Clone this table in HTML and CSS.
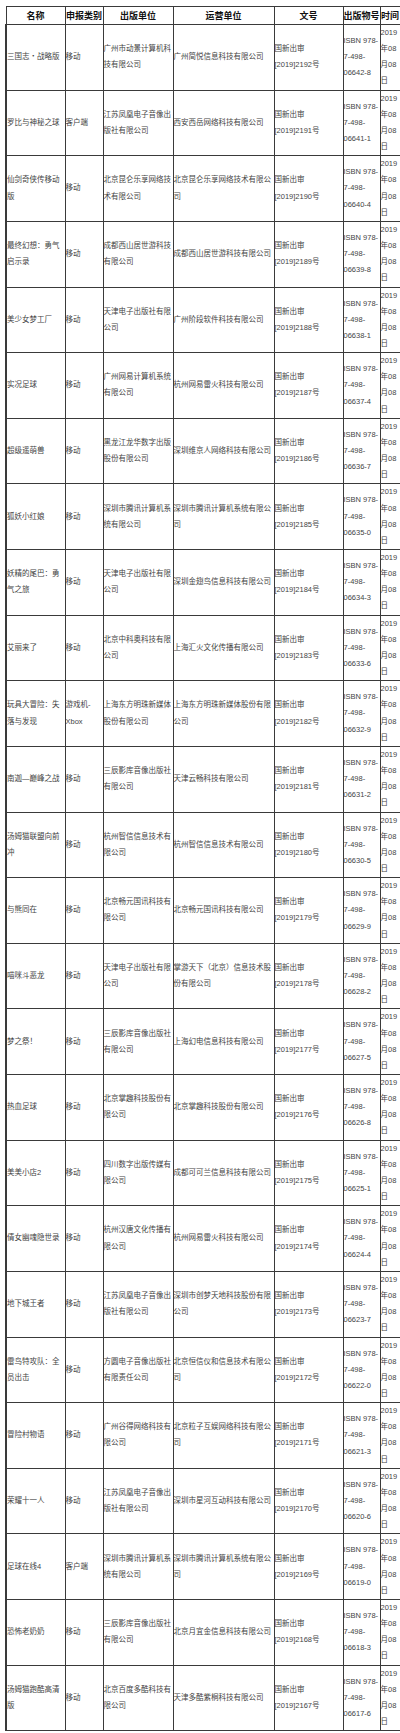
FILE: index.html
```html
<!DOCTYPE html>
<html lang="zh-CN">
<head>
<meta charset="utf-8">
<title>版号列表</title>
<link rel="stylesheet" href="styles.css">
</head>
<body>
<table class="list">
  <colgroup>
    <col class="c-name"><col class="c-type"><col class="c-pub"><col class="c-op"><col class="c-no"><col class="c-isbn"><col class="c-date">
  </colgroup>
  <thead>
    <tr><th>名称</th><th>申报类别</th><th>出版单位</th><th>运营单位</th><th>文号</th><th>出版物号</th><th>时间</th></tr>
  </thead>
  <tbody>
    <tr><td>三国志・战略版</td><td>移动</td><td>广州市动景计算机科技有限公司</td><td>广州简悦信息科技有限公司</td><td>国新出审<span class="num">[2019]2192号</span></td><td>ISBN 978-7-498-06642-8</td><td>2019年08月08日</td></tr>
    <tr><td>罗比与神秘之球</td><td>客户端</td><td>江苏凤凰电子音像出版社有限公司</td><td>西安西岳网络科技有限公司</td><td>国新出审<span class="num">[2019]2191号</span></td><td>ISBN 978-7-498-06641-1</td><td>2019年08月08日</td></tr>
    <tr><td>仙剑奇侠传移动版</td><td>移动</td><td>北京昆仑乐享网络技术有限公司</td><td>北京昆仑乐享网络技术有限公司</td><td>国新出审<span class="num">[2019]2190号</span></td><td>ISBN 978-7-498-06640-4</td><td>2019年08月08日</td></tr>
    <tr><td>最终幻想：勇气启示录</td><td>移动</td><td>成都西山居世游科技有限公司</td><td>成都西山居世游科技有限公司</td><td>国新出审<span class="num">[2019]2189号</span></td><td>ISBN 978-7-498-06639-8</td><td>2019年08月08日</td></tr>
    <tr><td>美少女梦工厂</td><td>移动</td><td>天津电子出版社有限公司</td><td>广州阶段软件科技有限公司</td><td>国新出审<span class="num">[2019]2188号</span></td><td>ISBN 978-7-498-06638-1</td><td>2019年08月08日</td></tr>
    <tr><td>实况足球</td><td>移动</td><td>广州网易计算机系统有限公司</td><td>杭州网易雷火科技有限公司</td><td>国新出审<span class="num">[2019]2187号</span></td><td>ISBN 978-7-498-06637-4</td><td>2019年08月08日</td></tr>
    <tr><td>超级遥萌兽</td><td>移动</td><td>黑龙江龙华数字出版股份有限公司</td><td>深圳维京人网络科技有限公司</td><td>国新出审<span class="num">[2019]2186号</span></td><td>ISBN 978-7-498-06636-7</td><td>2019年08月08日</td></tr>
    <tr><td>狐妖小红娘</td><td>移动</td><td>深圳市腾讯计算机系统有限公司</td><td>深圳市腾讯计算机系统有限公司</td><td>国新出审<span class="num">[2019]2185号</span></td><td>ISBN 978-7-498-06635-0</td><td>2019年08月08日</td></tr>
    <tr><td>妖精的尾巴：勇气之旅</td><td>移动</td><td>天津电子出版社有限公司</td><td>深圳金翅鸟信息科技有限公司</td><td>国新出审<span class="num">[2019]2184号</span></td><td>ISBN 978-7-498-06634-3</td><td>2019年08月08日</td></tr>
    <tr><td>艾丽来了</td><td>移动</td><td>北京中科奥科技有限公司</td><td>上海汇火文化传播有限公司</td><td>国新出审<span class="num">[2019]2183号</span></td><td>ISBN 978-7-498-06633-6</td><td>2019年08月08日</td></tr>
    <tr><td>玩具大冒险：失落与发现</td><td>游戏机-Xbox</td><td>上海东方明珠新媒体股份有限公司</td><td>上海东方明珠新媒体股份有限公司</td><td>国新出审<span class="num">[2019]2182号</span></td><td>ISBN 978-7-498-06632-9</td><td>2019年08月08日</td></tr>
    <tr><td>南迦—巅峰之战</td><td>移动</td><td>三辰影库音像出版社有限公司</td><td>天津云畅科技有限公司</td><td>国新出审<span class="num">[2019]2181号</span></td><td>ISBN 978-7-498-06631-2</td><td>2019年08月08日</td></tr>
    <tr><td>汤姆猫联盟向前冲</td><td>移动</td><td>杭州智信信息技术有限公司</td><td>杭州智信信息技术有限公司</td><td>国新出审<span class="num">[2019]2180号</span></td><td>ISBN 978-7-498-06630-5</td><td>2019年08月08日</td></tr>
    <tr><td>与熊同在</td><td>移动</td><td>北京畅元国讯科技有限公司</td><td>北京畅元国讯科技有限公司</td><td>国新出审<span class="num">[2019]2179号</span></td><td>ISBN 978-7-498-06629-9</td><td>2019年08月08日</td></tr>
    <tr><td>喵咪斗恶龙</td><td>移动</td><td>天津电子出版社有限公司</td><td>掌游天下（北京）信息技术股份有限公司</td><td>国新出审<span class="num">[2019]2178号</span></td><td>ISBN 978-7-498-06628-2</td><td>2019年08月08日</td></tr>
    <tr><td>梦之祭！</td><td>移动</td><td>三辰影库音像出版社有限公司</td><td>上海幻电信息科技有限公司</td><td>国新出审<span class="num">[2019]2177号</span></td><td>ISBN 978-7-498-06627-5</td><td>2019年08月08日</td></tr>
    <tr><td>热血足球</td><td>移动</td><td>北京掌趣科技股份有限公司</td><td>北京掌趣科技股份有限公司</td><td>国新出审<span class="num">[2019]2176号</span></td><td>ISBN 978-7-498-06626-8</td><td>2019年08月08日</td></tr>
    <tr><td>美美小店2</td><td>移动</td><td>四川数字出版传媒有限公司</td><td>成都可可兰信息科技有限公司</td><td>国新出审<span class="num">[2019]2175号</span></td><td>ISBN 978-7-498-06625-1</td><td>2019年08月08日</td></tr>
    <tr><td>倩女幽魂隐世录</td><td>移动</td><td>杭州汉唐文化传播有限公司</td><td>杭州网易雷火科技有限公司</td><td>国新出审<span class="num">[2019]2174号</span></td><td>ISBN 978-7-498-06624-4</td><td>2019年08月08日</td></tr>
    <tr><td>地下城王者</td><td>移动</td><td>江苏凤凰电子音像出版社有限公司</td><td>深圳市创梦天地科技股份有限公司</td><td>国新出审<span class="num">[2019]2173号</span></td><td>ISBN 978-7-498-06623-7</td><td>2019年08月08日</td></tr>
    <tr><td>雷鸟特攻队：全员出击</td><td>移动</td><td>方圆电子音像出版社有限责任公司</td><td>北京恒信仪和信息技术有限公司</td><td>国新出审<span class="num">[2019]2172号</span></td><td>ISBN 978-7-498-06622-0</td><td>2019年08月08日</td></tr>
    <tr><td>冒险村物语</td><td>移动</td><td>广州谷得网络科技有限公司</td><td>北京粒子互娱网络科技有限公司</td><td>国新出审<span class="num">[2019]2171号</span></td><td>ISBN 978-7-498-06621-3</td><td>2019年08月08日</td></tr>
    <tr><td>荣耀十一人</td><td>移动</td><td>江苏凤凰电子音像出版社有限公司</td><td>深圳市星河互动科技有限公司</td><td>国新出审<span class="num">[2019]2170号</span></td><td>ISBN 978-7-498-06620-6</td><td>2019年08月08日</td></tr>
    <tr><td>足球在线4</td><td>客户端</td><td>深圳市腾讯计算机系统有限公司</td><td>深圳市腾讯计算机系统有限公司</td><td>国新出审<span class="num">[2019]2169号</span></td><td>ISBN 978-7-498-06619-0</td><td>2019年08月08日</td></tr>
    <tr><td>恐怖老奶奶</td><td>移动</td><td>三辰影库音像出版社有限公司</td><td>北京月宜金信息科技有限公司</td><td>国新出审<span class="num">[2019]2168号</span></td><td>ISBN 978-7-498-06618-3</td><td>2019年08月08日</td></tr>
    <tr><td>汤姆猫跑酷高清版</td><td>移动</td><td>北京百度多酷科技有限公司</td><td>天津多酷紫桐科技有限公司</td><td>国新出审<span class="num">[2019]2167号</span></td><td>ISBN 978-7-498-06617-6</td><td>2019年08月08日</td></tr>
  </tbody>
</table>
</body>
</html>
```

FILE: styles.css
```css
html, body {
  margin: 0;
  padding: 0;
  background: #fff;
}

body {
  padding: 6px 0 0 5px;
}

.list {
  border-collapse: collapse;
  table-layout: fixed;
  width: 394px;
  font-family: "Liberation Sans", "Noto Sans CJK SC", sans-serif;
  color: #444;
}

.c-name { width: 59px; }
.c-type { width: 38px; }
.c-pub { width: 70px; }
.c-op { width: 101px; }
.c-no { width: 69px; }
.c-isbn { width: 37px; }
.c-date { width: 20px; }

.list th,
.list td {
  border: 1px solid #3a3a3a;
  padding: 0;
  vertical-align: middle;
  word-break: normal;
}

.list th {
  font-family: "Noto Sans CJK SC", sans-serif;
  font-size: 9px;
  font-weight: bold;
  line-height: 17px;
  color: #111;
  text-align: center;
  white-space: nowrap;
}

.list td {
  font-size: 7.5px;
  line-height: 16.15px;
  text-align: left;
}

.list .num {
  white-space: nowrap;
}

.list tbody tr > td:first-child {
  border-left-width: 2px;
}
```
